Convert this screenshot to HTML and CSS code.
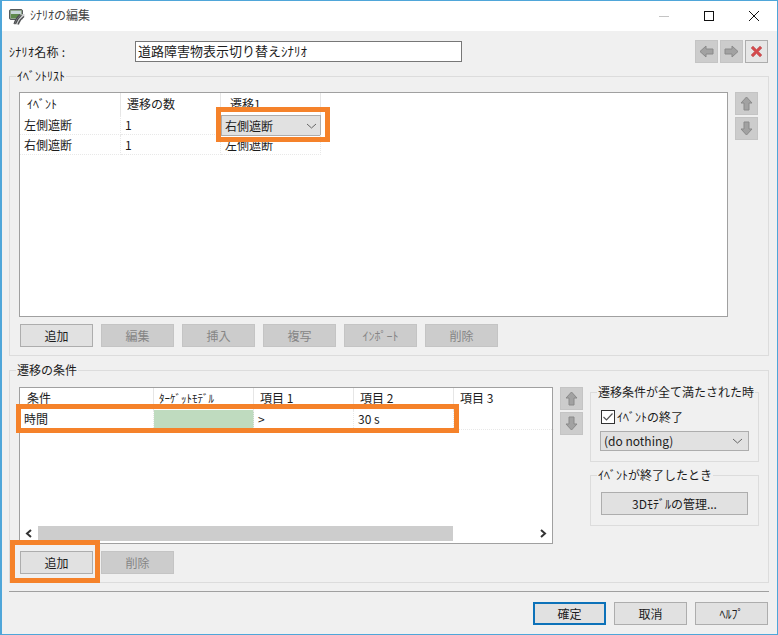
FILE: index.html
```html
<!DOCTYPE html>
<html lang="ja">
<head>
<meta charset="utf-8">
<title>シナリオの編集</title>
<link rel="stylesheet" href="styles.css">
</head>
<body>
<div class="window">
  <div class="titlebar">
    <svg class="app-icon" width="16" height="17" viewBox="0 0 16 17">
      <rect x=".5" y="1.500" width="13" height="10" rx="1.500" fill="#8fa58a" stroke="#55595c"/>
      <rect x="2" y="3" width="10" height="3" fill="#c9d6d8"/>
      <path d="M2 6H12V10H2Z" fill="#5f8a4c"/>
      <path d="M5 16.500C6 13 8 9 11 6.500L15.500 6V9C13 11 11 14 10.500 16.500Z" fill="#d2d3d4"/>
      <path d="M6.500 16C7.500 13 9.500 9.500 12.500 7M9 16.500C10 13.500 12 10.500 15 8.500M5 16C6 12.500 8 9 11 6.500" fill="none" stroke="#4b4d4f" stroke-width="1.100"/>
    </svg>
    <span class="title">ｼﾅﾘｵの編集</span>
    <div class="win-controls">
      <svg width="12" height="12" viewBox="0 0 12 12"><path d="M1 6.500H11" stroke="#c4c4c4" stroke-width="1"/></svg>
      <svg width="12" height="12" viewBox="0 0 12 12"><rect x="1.500" y="1.500" width="9" height="9" fill="none" stroke="#111" stroke-width="1"/></svg>
      <svg width="12" height="12" viewBox="0 0 12 12"><path d="M1 1L11 11M11 1L1 11" stroke="#111" stroke-width="1"/></svg>
    </div>
  </div>

  <div class="content">
    <div class="name-row">
      <span class="name-label">ｼﾅﾘｵ名称 :</span>
      <div class="name-input">道路障害物表示切り替えｼﾅﾘｵ</div>
      <div class="nav-buttons">
        <div class="icon-btn"><svg width="15" height="13" viewBox="0 0 15 13"><path d="M1 6.500L7 1V4H14V9H7V12Z" fill="#a2a2a2" stroke="#8a8a8a"/></svg></div>
        <div class="icon-btn"><svg width="15" height="13" viewBox="0 0 15 13"><path d="M14 6.500L8 1V4H1V9H8V12Z" fill="#a2a2a2" stroke="#8a8a8a"/></svg></div>
        <div class="icon-btn icon-btn-on"><svg width="13" height="13" viewBox="0 0 13 13"><path d="M3 1L6.500 4.500L10 1L12 3L8.500 6.500L12 10L10 12L6.500 8.500L3 12L1 10L4.500 6.500L1 3Z" fill="#d44a4d" stroke="#c06a6a" stroke-width=".6"/></svg></div>
      </div>
    </div>

    <section class="group group-events">
      <div class="legend">ｲﾍﾞﾝﾄﾘｽﾄ</div>
      <div class="list-row">
        <div class="list list-events">
          <div class="row row-head">
            <div class="cell head first">ｲﾍﾞﾝﾄ</div>
            <div class="cell head">遷移の数</div>
            <div class="cell head head-shift">遷移1</div>
          </div>
          <div class="row">
            <div class="cell first">左側遮断</div>
            <div class="cell">1</div>
            <div class="cell cell-combo">
              <div class="combo"><span>右側遮断</span><svg width="11" height="6" viewBox="0 0 11 6"><path d="M1 1L5.500 5L10 1" fill="none" stroke="#666"/></svg></div>
            </div>
          </div>
          <div class="row">
            <div class="cell first">右側遮断</div>
            <div class="cell">1</div>
            <div class="cell">左側遮断</div>
          </div>
        </div>
        <div class="updown">
          <div class="icon-btn"><svg width="13" height="15" viewBox="0 0 13 15"><path d="M6.500 1L12 7H9V14H4V7H1Z" fill="#a2a2a2" stroke="#8a8a8a"/></svg></div>
          <div class="icon-btn"><svg width="13" height="15" viewBox="0 0 13 15"><path d="M6.500 14L12 8H9V1H4V8H1Z" fill="#a2a2a2" stroke="#8a8a8a"/></svg></div>
        </div>
      </div>
      <div class="btn-row">
        <div class="btn">追加</div>
        <div class="btn off">編集</div>
        <div class="btn off">挿入</div>
        <div class="btn off">複写</div>
        <div class="btn off">ｲﾝﾎﾟｰﾄ</div>
        <div class="btn off">削除</div>
      </div>
    </section>

    <section class="group group-cond">
      <div class="legend">遷移の条件</div>
      <div class="list-row list-row-cond">
        <div class="list list-cond">
          <div class="row row-head">
            <div class="cell head c1">条件</div>
            <div class="cell head small-head">ﾀｰｹﾞｯﾄﾓﾃﾞﾙ</div>
            <div class="cell head">項目 1</div>
            <div class="cell head">項目 2</div>
            <div class="cell head last">項目 3</div>
          </div>
          <div class="row">
            <div class="cell c1">時間</div>
            <div class="cell green"></div>
            <div class="cell">&gt;</div>
            <div class="cell">30 s</div>
            <div class="cell last"></div>
          </div>
          <div class="list-spacer"></div>
          <div class="scrollbar">
            <svg class="sb-arrow" width="18" height="15" viewBox="0 0 18 15"><path d="M11 4L7 7.500L11 11" fill="none" stroke="#333" stroke-width="2"/></svg>
            <div class="sb-thumb"></div>
            <svg class="sb-arrow" width="18" height="15" viewBox="0 0 18 15"><path d="M7 4L11 7.500L7 11" fill="none" stroke="#333" stroke-width="2"/></svg>
          </div>
        </div>
        <div class="updown">
          <div class="icon-btn"><svg width="13" height="15" viewBox="0 0 13 15"><path d="M6.500 1L12 7H9V14H4V7H1Z" fill="#a2a2a2" stroke="#8a8a8a"/></svg></div>
          <div class="icon-btn"><svg width="13" height="15" viewBox="0 0 13 15"><path d="M6.500 14L12 8H9V1H4V8H1Z" fill="#a2a2a2" stroke="#8a8a8a"/></svg></div>
        </div>
        <div class="side-panel">
          <section class="group side-a">
            <div class="legend">遷移条件が全て満たされた時</div>
            <div class="check-row">
              <svg class="check" width="14" height="14" viewBox="0 0 14 14"><rect x=".5" y=".5" width="13" height="13" fill="#fff" stroke="#333"/><path d="M2.500 7L5.500 10L11.500 3.500" fill="none" stroke="#555" stroke-width="1.200"/></svg>
              <span>ｲﾍﾞﾝﾄの終了</span>
            </div>
            <div class="combo combo-side"><span>(do nothing)</span><svg width="11" height="6" viewBox="0 0 11 6"><path d="M1 1L5.500 5L10 1" fill="none" stroke="#666"/></svg></div>
          </section>
          <section class="group side-b">
            <div class="legend">ｲﾍﾞﾝﾄが終了したとき</div>
            <div class="btn btn-wide">3Dﾓﾃﾞﾙの管理...</div>
          </section>
        </div>
      </div>
      <div class="btn-row btn-row-cond">
        <div class="btn">追加</div>
        <div class="btn off">削除</div>
      </div>
    </section>

    <div class="separator"></div>
    <div class="footer">
      <div class="btn default">確定</div>
      <div class="btn">取消</div>
      <div class="btn">ﾍﾙﾌﾟ</div>
    </div>
  </div>

  <div class="mark mark-combo"></div>
  <div class="mark mark-row"></div>
  <div class="mark mark-add"></div>
</div>
</body>
</html>
```

FILE: styles.css
```css
* { box-sizing: border-box; }
html, body { margin: 0; padding: 0; }
body {
  width: 778px;
  height: 635px;
  overflow: hidden;
  font-family: "Noto Sans CJK JP", "Noto Sans", sans-serif;
  font-size: 12px;
  line-height: 16px;
  color: #1c1c1c;
}
.window {
  position: relative;
  width: 778px;
  height: 635px;
  border: 1px solid #4fa6d9;
  border-left-width: 2px;
  background: #f0f0f0;
  display: flex;
  flex-direction: column;
}
.titlebar {
  height: 30px;
  flex: none;
  background: #fff;
  display: flex;
  align-items: center;
  padding-left: 7px;
}
.app-icon { margin-right: 5px; }
.title { color: #444; margin-top: -2px; }
.win-controls {
  margin-left: auto;
  display: flex;
  gap: 33px;
  margin-right: 17px;
}
.content {
  flex: 1;
  padding: 9px 8px 0 7px;
  display: flex;
  flex-direction: column;
}
.name-row { display: flex; height: 23px; align-items: center; }
.name-label { width: 126px; letter-spacing: .3px; white-space: nowrap; }
.name-input {
  width: 327px;
  height: 21px;
  border: 1px solid #777;
  background: #fff;
  font-size: 13px;
  line-height: 18px;
  padding-left: 2px;
  white-space: nowrap;
}
.nav-buttons { margin-left: auto; margin-right: 1px; display: flex; gap: 2px; }
.icon-btn {
  width: 23px;
  height: 23px;
  background: #cccccc;
  border: 1px solid #c4c4c4;
  display: flex;
  align-items: center;
  justify-content: center;
}
.icon-btn-on { background: #e6e6e6; border-color: #adadad; }

.group {
  border: 1px solid #dcdcdc;
  display: flex;
  flex-direction: column;
}
.legend {
  margin: -9px 0 0 -3px;
  height: 16px;
  width: fit-content;
  padding: 0 1px;
  background: #f0f0f0;
  white-space: nowrap;
}
.group-events { margin-top: 13px; height: 280px; padding: 0 9px; }
.group-cond { margin-top: 14px; height: 213px; padding: 0 9px; }
.list-row { display: flex; gap: 7px; margin-top: 8px; }
.list-row-cond { margin-top: 9px; }
.list {
  background: #fff;
  border: 1px solid #a0a0a0;
  display: flex;
  flex-direction: column;
}
.list-events { width: 709px; height: 225px; }
.list-cond { width: 534px; height: 157px; }
.row { display: flex; height: 20px; flex: none; }
.row-head { height: 22px; }
.cell {
  width: 100px;
  flex: none;
  padding-left: 4px;
  border-right: 1px dotted #e8e8e8;
  border-bottom: 1px dotted #e8e8e8;
  line-height: 19px;
  white-space: nowrap;
}
.first { width: 101px; }
.head { border-right: 1px solid #e6e6e6; border-bottom: 0; padding-left: 6px; line-height: 21px; }
.head.first { padding-left: 7px; }
.head-shift { padding-left: 9px; }
.cell-combo { padding: 0; border: 0; }
.combo {
  height: 21px;
  background: #e1e1e1;
  border: 1px solid #adadad;
  display: flex;
  align-items: center;
  justify-content: space-between;
  padding: 0 3px 0 3px;
}
.c1 { width: 134px; }
.head.c1 { padding-left: 7px; }
.last { border-right: 0; }
.small-head { font-size: 11px; padding-left: 5px; }
.green { background: #bfdbbf; }
.list-cond .row .cell { line-height: 17px; }
.list-cond .row-head .cell { line-height: 20px; }
.list-spacer { flex: 1; }
.scrollbar { display: flex; height: 15px; margin-bottom: 2px; flex: none; }
.sb-arrow { flex: none; }
.sb-thumb { width: 415px; background: #cdcdcd; margin-right: auto; }
.updown { display: flex; flex-direction: column; gap: 2px; }

.side-panel { display: flex; flex-direction: column; margin-top: 5px; width: 169px; }
.side-a { height: 70px; padding: 0 9px; }
.side-b { height: 51px; margin-top: 13px; padding: 0 10px; }
.side-b .legend { margin-left: -4px; }
.check-row { display: flex; align-items: center; gap: 2px; height: 16px; margin-top: 9px; padding-left: 1px; }
.check { flex: none; }
.combo-side { margin-top: 6px; height: 20px; padding: 0 5px 0 3px; }

.btn-row { display: flex; gap: 8px; margin-top: 7px; padding-left: 1px; }
.btn {
  width: 73px;
  height: 23px;
  flex: none;
  background: #e1e1e1;
  border: 1px solid #adadad;
  text-align: center;
  line-height: 21px;
  white-space: nowrap;
}
.side-b .btn-wide { width: 147px; margin-top: 9px; }
.off { background: #cccccc; border-color: #c4c4c4; color: #858585; }
.default { border: 2px solid #0d72b9; line-height: 19px; }

.separator { margin-top: 8px; height: 1px; background: #a0a0a0; }
.footer { display: flex; justify-content: flex-end; gap: 8px; margin-top: 10px; margin-right: 1px; }

.mark { position: absolute; border: 5px solid #f5822a; pointer-events: none; }
.mark-combo { left: 214px; top: 106px; width: 114px; height: 35px; }
.mark-row { left: 14px; top: 403px; width: 443px; height: 29px; }
.mark-add { left: 8px; top: 539px; width: 90px; height: 43px; }
```
